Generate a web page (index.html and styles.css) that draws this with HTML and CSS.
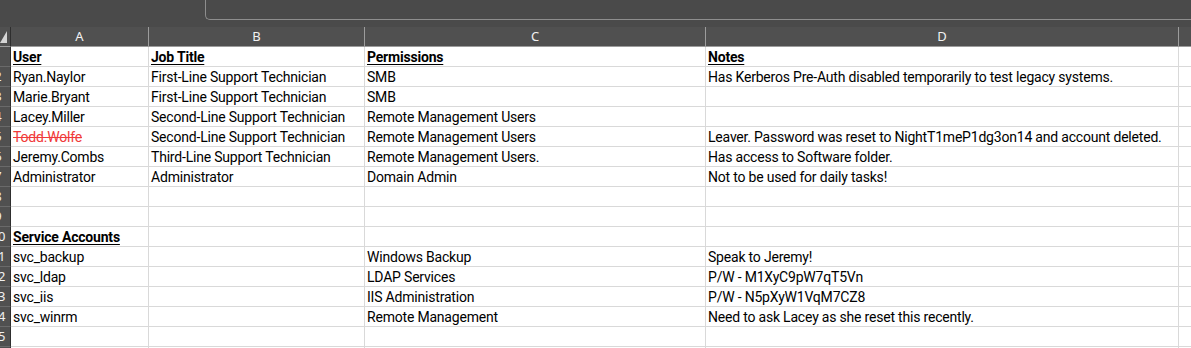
FILE: index.html
```html
<!DOCTYPE html>
<html>
<head>
<meta charset="utf-8">
<link rel="stylesheet" href="styles.css">
</head>
<body>
<div class="app">
  <div class="topbar"><div class="formula-box"></div></div>
  <div class="sheet">
    <div class="row colhead">
      <div class="corner"><svg width="8" height="20" viewBox="0 0 8 20"><polygon points="0,16 7,4 7,16" fill="#d6d6d6"/></svg></div>
      <div class="ch">A</div>
      <div class="ch">B</div>
      <div class="ch">C</div>
      <div class="ch">D</div>
      <div class="ch last"></div>
    </div>

    <div class="row">
      <div class="rh"><span>1</span></div>
      <div class="c"><b class="hd">User</b></div>
      <div class="c"><b class="hd">Job Title</b></div>
      <div class="c"><b class="hd">Permissions</b></div>
      <div class="c"><b class="hd">Notes</b></div>
      <div class="c last"></div>
    </div>
    <div class="row">
      <div class="rh"><span>2</span></div>
      <div class="c">Ryan.Naylor</div>
      <div class="c">First-Line Support Technician</div>
      <div class="c">SMB</div>
      <div class="c">Has Kerberos Pre-Auth disabled temporarily to test legacy systems.</div>
      <div class="c last"></div>
    </div>
    <div class="row">
      <div class="rh"><span>3</span></div>
      <div class="c">Marie.Bryant</div>
      <div class="c">First-Line Support Technician</div>
      <div class="c">SMB</div>
      <div class="c"></div>
      <div class="c last"></div>
    </div>
    <div class="row">
      <div class="rh"><span>4</span></div>
      <div class="c">Lacey.Miller</div>
      <div class="c">Second-Line Support Technician</div>
      <div class="c">Remote Management Users</div>
      <div class="c"></div>
      <div class="c last"></div>
    </div>
    <div class="row">
      <div class="rh"><span>5</span></div>
      <div class="c"><span class="struck">Todd.Wolfe</span></div>
      <div class="c">Second-Line Support Technician</div>
      <div class="c">Remote Management Users</div>
      <div class="c">Leaver. Password was reset to NightT1meP1dg3on14 and account deleted.</div>
      <div class="c last"></div>
    </div>
    <div class="row">
      <div class="rh"><span>6</span></div>
      <div class="c">Jeremy.Combs</div>
      <div class="c">Third-Line Support Technician</div>
      <div class="c">Remote Management Users.</div>
      <div class="c">Has access to Software folder.</div>
      <div class="c last"></div>
    </div>
    <div class="row">
      <div class="rh"><span>7</span></div>
      <div class="c">Administrator</div>
      <div class="c">Administrator</div>
      <div class="c">Domain Admin</div>
      <div class="c">Not to be used for daily tasks!</div>
      <div class="c last"></div>
    </div>
    <div class="row">
      <div class="rh"><span>8</span></div>
      <div class="c"></div><div class="c"></div><div class="c"></div><div class="c"></div><div class="c last"></div>
    </div>
    <div class="row">
      <div class="rh"><span>9</span></div>
      <div class="c"></div><div class="c"></div><div class="c"></div><div class="c"></div><div class="c last"></div>
    </div>
    <div class="row">
      <div class="rh"><span>10</span></div>
      <div class="c"><b class="hd">Service Accounts</b></div>
      <div class="c"></div><div class="c"></div><div class="c"></div><div class="c last"></div>
    </div>
    <div class="row">
      <div class="rh"><span>11</span></div>
      <div class="c">svc_backup</div>
      <div class="c"></div>
      <div class="c">Windows Backup</div>
      <div class="c">Speak to Jeremy!</div>
      <div class="c last"></div>
    </div>
    <div class="row">
      <div class="rh"><span>12</span></div>
      <div class="c">svc_ldap</div>
      <div class="c"></div>
      <div class="c">LDAP Services</div>
      <div class="c">P/W - M1XyC9pW7qT5Vn</div>
      <div class="c last"></div>
    </div>
    <div class="row">
      <div class="rh"><span>13</span></div>
      <div class="c">svc_iis</div>
      <div class="c"></div>
      <div class="c">IIS Administration</div>
      <div class="c">P/W - N5pXyW1VqM7CZ8</div>
      <div class="c last"></div>
    </div>
    <div class="row">
      <div class="rh"><span>14</span></div>
      <div class="c">svc_winrm</div>
      <div class="c"></div>
      <div class="c">Remote Management</div>
      <div class="c">Need to ask Lacey as she reset this recently.</div>
      <div class="c last"></div>
    </div>
    <div class="row">
      <div class="rh"><span>15</span></div>
      <div class="c"></div><div class="c"></div><div class="c"></div><div class="c"></div><div class="c last"></div>
    </div>
    <div class="row">
      <div class="rh"><span>16</span></div>
      <div class="c"></div><div class="c"></div><div class="c"></div><div class="c"></div><div class="c last"></div>
    </div>
  </div>
</div>
</body>
</html>
```

FILE: styles.css
```css
html, body {
  margin: 0;
  padding: 0;
  background: #ffffff;
  overflow: hidden;
}

.app {
  width: 1191px;
  height: 348px;
  overflow: hidden;
  font-family: Roboto, "Liberation Sans", sans-serif;
}

.topbar {
  height: 27px;
  background: #4a4a4a;
  display: flex;
}

.formula-box {
  margin-left: 205px;
  flex: 1;
  height: 19px;
  border-left: 1px solid #8e8e8e;
  border-bottom: 1px solid #8e8e8e;
  border-bottom-left-radius: 5px;
  background: #4a4a4a;
}

.sheet {
  --cols: 11px 138px 216px 341px 473px 1fr;
}

.row {
  display: grid;
  grid-template-columns: var(--cols);
  height: 20px;
}

.colhead {
  background: #505050;
}

.corner {
  box-sizing: border-box;
  border-right: 1px solid #2e2e2e;
  border-bottom: 1px solid #9c9c9c;
  height: 20px;
  overflow: hidden;
}

.corner svg {
  display: block;
}

.ch {
  box-sizing: border-box;
  height: 20px;
  border-right: 1px solid #9c9c9c;
  border-bottom: 1px solid #9c9c9c;
  color: #f2f2f2;
  font-family: "Noto Sans", "Open Sans", sans-serif;
  font-size: 13px;
  line-height: 19px;
  text-align: center;
}

.ch.last {
  border-right: none;
}

.rh {
  box-sizing: border-box;
  height: 20px;
  background: #505050;
  border-right: 1px solid #2e2e2e;
  border-bottom: 1px solid #6a6a6a;
  overflow: hidden;
}

.rh span {
  display: block;
  width: 30px;
  margin-left: -17px;
  text-align: center;
  color: #f0f0f0;
  font-family: "Noto Sans", "Open Sans", sans-serif;
  font-size: 13px;
  line-height: 19px;
}

.c {
  box-sizing: border-box;
  height: 20px;
  border-right: 1px solid #d9d9d9;
  border-bottom: 1px solid #d9d9d9;
  padding: 1px 0 0 2px;
  font-size: 14px;
  letter-spacing: -0.2px;
  line-height: 18px;
  color: #000000;
  white-space: nowrap;
}

.c.last {
  border-right: none;
}

.hd {
  font-weight: 700;
  text-decoration: underline;
  text-decoration-thickness: 1px;
  text-underline-offset: 2px;
}

.struck {
  color: #f03a3a;
  text-decoration: line-through;
}
```
